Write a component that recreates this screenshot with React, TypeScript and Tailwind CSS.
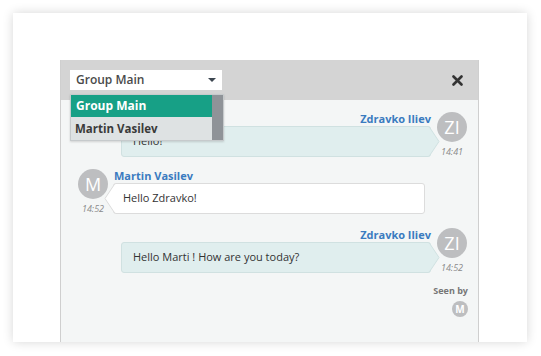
import React from "react";

type Side = "left" | "right";

const Avatar = ({ initials, size = "lg" }: { initials: string; size?: "lg" | "sm" }) =>
  size === "lg" ? (
    <div className="relative z-10 flex h-[30px] w-[30px] items-center justify-center rounded-full bg-[#bdbec0] text-[18px] leading-none text-white">
      {initials}
    </div>
  ) : (
    <div className="flex h-[16px] w-[16px] items-center justify-center rounded-full bg-[#bdbec0] text-[10px] font-bold leading-none text-white">
      {initials}
    </div>
  );

const Bubble = ({ side, text, padLeft }: { side: Side; text: string; padLeft: string }) => {
  const mine = side === "right";
  const fill = mine ? "#e0eeee" : "#ffffff";
  const stroke = mine ? "#d0e1e1" : "#dcdcdc";
  return (
    <div
      className={`relative flex h-[31px] w-full items-center rounded-[3px] border text-[11px] text-[#333] ${
        mine ? "border-[#d0e1e1] bg-[#e0eeee]" : "border-[#dcdcdc] bg-white"
      } ${padLeft}`}
    >
      {text}
      <svg
        width="11"
        height="31"
        viewBox="0 0 11 31"
        className={`absolute top-[-1px] ${mine ? "right-[-10px]" : "left-[-10px] scale-x-[-1]"}`}
        aria-hidden
      >
        <polygon points="0,0.5 10,15.5 0,30.5" fill={fill} />
        <polyline points="0,0.5 10,15.5 0,30.5" fill="none" stroke={stroke} strokeWidth="1" />
      </svg>
    </div>
  );
};

const Time = ({ t }: { t: string }) => (
  <div className="mt-[4px] text-[9px] italic leading-[11px] text-[#8a8a8a]">{t}</div>
);

export default function App() {
  return (
    <div className="h-[356px] w-[541px] overflow-hidden bg-white pl-[13px] pt-[13px] font-['Open_Sans',sans-serif]">
      <div className="h-[329px] w-[514px] overflow-hidden bg-white pl-[47px] pt-[47px] shadow-[0_0_10px_rgba(0,0,0,0.16)]">
        <div className="relative h-[290px] w-[419px] border-x border-[#cfcfcf] bg-[#f4f6f6]">
          {/* header */}
          <div className="flex h-[40px] items-center justify-between bg-[#d4d4d4] pl-[9px] pr-[15px]">
            <div className="flex h-[20px] w-[152px] items-center justify-between bg-white pl-[6px] pr-[6px] text-[12px] font-semibold text-[#4a4a4a]">
              <span>Group Main</span>
              <span className="h-0 w-0 border-x-[4px] border-t-[4px] border-x-transparent border-t-[#3c4650]" />
            </div>
            <svg width="11" height="11" viewBox="0 0 11 11" aria-hidden>
              <path d="M1.5 1.5l8 8M9.5 1.5l-8 8" stroke="#333" strokeWidth="2.6" strokeLinecap="round" />
            </svg>
          </div>

          {/* dropdown list */}
          <div className="absolute left-[9px] top-[34px] z-20 flex w-[154px] border border-[#c6cacc] shadow-[0_1px_2px_rgba(0,0,0,0.15)]">
            <div className="flex-1">
              <div className="flex h-[22px] items-center bg-[#17a086] pl-[5px] text-[12px] font-bold text-white">
                Group Main
              </div>
              <div className="flex h-[23px] items-center bg-[#dee2e3] pl-[4px] text-[11.5px] font-bold text-[#3a3a3a]">
                Martin Vasilev
              </div>
            </div>
            <div className="w-[11px] bg-[#8f9398]" />
          </div>

          {/* messages */}
          <div className="pt-[12px]">
            <div className="flex items-start pl-[60px] pr-[11px]">
              <div className="flex flex-1 flex-col items-end">
                <div className="text-[11px] font-bold leading-[14px] text-[#3a7bc0]">Zdravko Iliev</div>
                <Bubble side="right" text="Hello!" padLeft="pl-[11px]" />
              </div>
              <div className="ml-[6px] flex flex-col items-center">
                <Avatar initials="ZI" />
                <Time t="14:41" />
              </div>
            </div>

            <div className="mt-[12px] flex items-start pl-[17px] pr-[53px]">
              <div className="mr-[5px] flex flex-col items-center">
                <Avatar initials="M" />
                <Time t="14:52" />
              </div>
              <div className="flex flex-1 flex-col items-start">
                <div className="pl-[1px] text-[11px] font-bold leading-[14px] text-[#3a7bc0]">Martin Vasilev</div>
                <Bubble side="left" text="Hello Zdravko!" padLeft="pl-[9px]" />
              </div>
            </div>

            <div className="mt-[14px] flex items-start pl-[60px] pr-[11px]">
              <div className="flex flex-1 flex-col items-end">
                <div className="text-[11px] font-bold leading-[14px] text-[#3a7bc0]">Zdravko Iliev</div>
                <Bubble side="right" text="Hello Marti ! How are you today?" padLeft="pl-[11px]" />
              </div>
              <div className="ml-[6px] flex flex-col items-center">
                <Avatar initials="ZI" />
                <Time t="14:52" />
              </div>
            </div>

            <div className="mt-[12px] flex flex-col items-end pr-[10px]">
              <div className="text-[9px] font-bold leading-[11px] text-[#777]">Seen by</div>
              <div className="mt-[5px]">
                <Avatar initials="M" size="sm" />
              </div>
            </div>
          </div>
        </div>
      </div>
    </div>
  );
}
